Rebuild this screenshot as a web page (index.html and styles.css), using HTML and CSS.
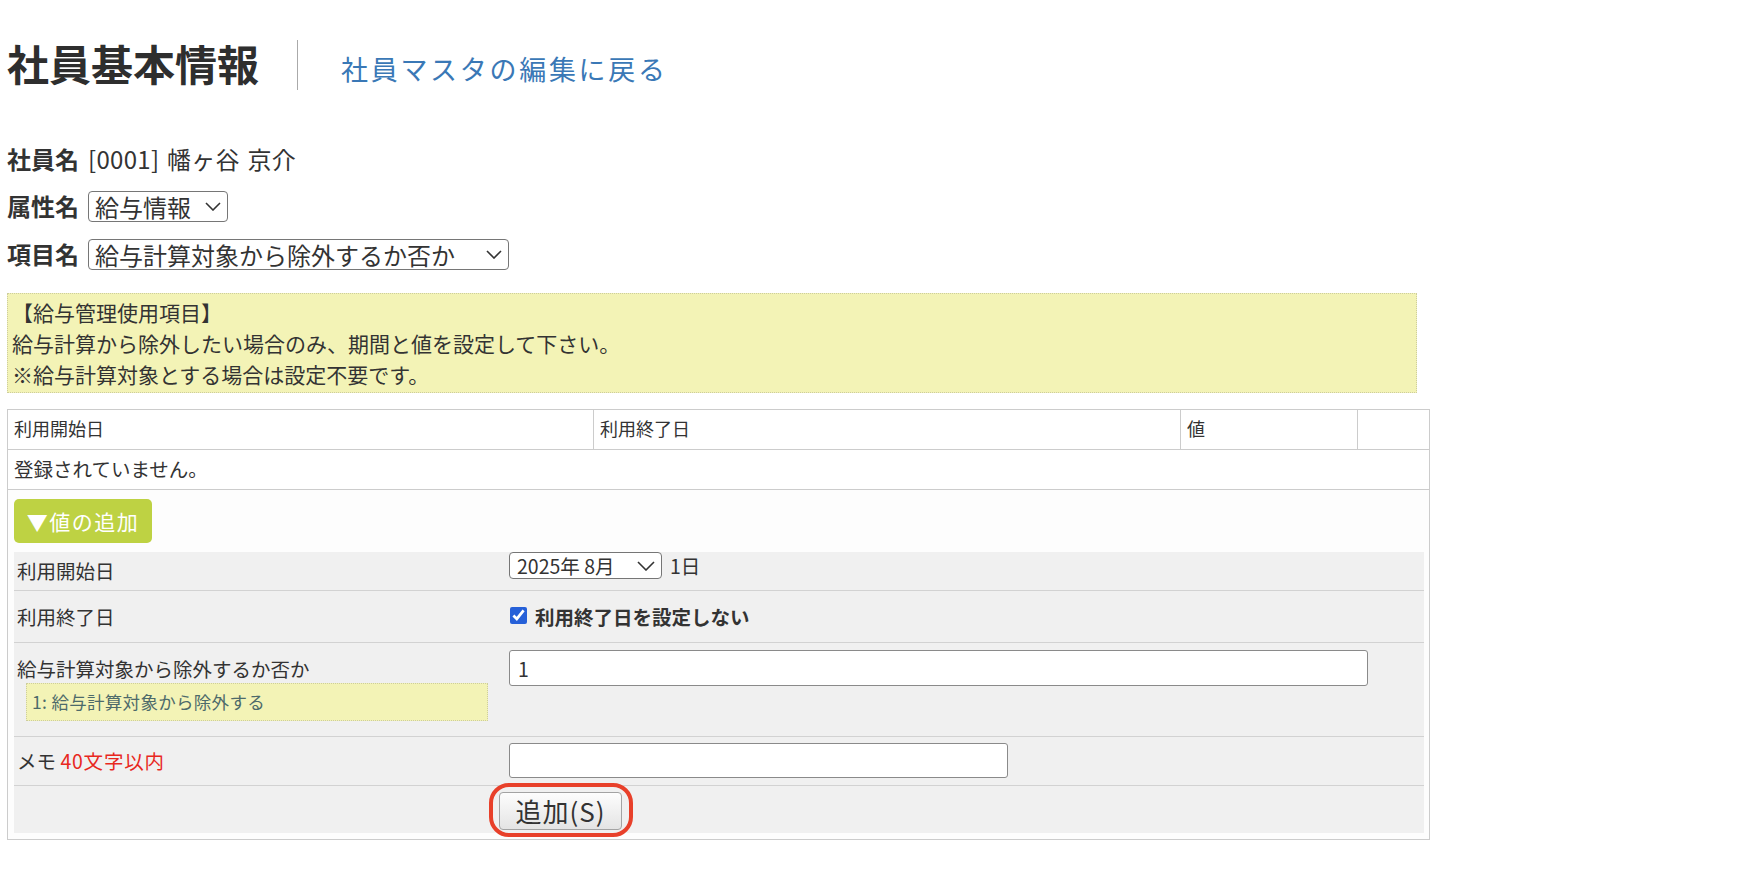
FILE: index.html
```html
<!DOCTYPE html>
<html lang="ja">
<head>
<meta charset="utf-8">
<title>社員基本情報</title>
<link rel="stylesheet" href="styles.css">
</head>
<body>
<div class="page">
  <header class="page-head">
    <h1 class="title">社員基本情報</h1>
    <a class="back-link" href="#">社員マスタの編集に戻る</a>
  </header>

  <div class="meta">
    <div class="meta-row"><span class="meta-label">社員名</span><span class="meta-name">[0001] 幡ヶ谷 京介</span></div>
    <div class="meta-row"><span class="meta-label">属性名</span>
      <span class="select-wrap sel-lg sel-attr">
        <select><option>給与情報</option></select>
        <svg class="chev" viewBox="0 0 16 9"><path d="M1 1 L8 8 L15 1" fill="none" stroke="#333" stroke-width="1.6"/></svg>
      </span>
    </div>
    <div class="meta-row"><span class="meta-label">項目名</span>
      <span class="select-wrap sel-lg sel-item">
        <select><option>給与計算対象から除外するか否か</option></select>
        <svg class="chev" viewBox="0 0 16 9"><path d="M1 1 L8 8 L15 1" fill="none" stroke="#333" stroke-width="1.6"/></svg>
      </span>
    </div>
  </div>

  <div class="notice">
    <div>【給与管理使用項目】</div>
    <div>給与計算から除外したい場合のみ、期間と値を設定して下さい。</div>
    <div>※給与計算対象とする場合は設定不要です。</div>
  </div>

  <div class="records">
    <div class="rec-head">
      <div>利用開始日</div>
      <div>利用終了日</div>
      <div>値</div>
      <div></div>
    </div>
    <div class="rec-empty">登録されていません。</div>
    <div class="rec-add">
      <button class="btn-toggle" type="button">▼値の追加</button>
      <div class="form">
        <div class="f-row r1">
          <div class="f-label">利用開始日</div>
          <div class="f-value v-top">
            <span class="select-wrap sel-sm">
              <select><option>2025年 8月</option></select>
              <svg class="chev" viewBox="0 0 18 10"><path d="M1 1 L9 9 L17 1" fill="none" stroke="#333" stroke-width="1.6"/></svg>
            </span>
            <span class="day">1日</span>
          </div>
        </div>
        <div class="f-row r2">
          <div class="f-label">利用終了日</div>
          <div class="f-value v-mid">
            <label class="check"><input type="checkbox" checked><span>利用終了日を設定しない</span></label>
          </div>
        </div>
        <div class="f-row r3">
          <div class="f-label l-top">
            <div>給与計算対象から除外するか否か</div>
            <div class="hint">1: 給与計算対象から除外する</div>
          </div>
          <div class="f-value v-pad7">
            <input class="txt txt-val" type="text" value="1">
          </div>
        </div>
        <div class="f-row r4">
          <div class="f-label">メモ <span class="limit">40文字以内</span></div>
          <div class="f-value v-pad6">
            <input class="txt txt-memo" type="text" value="">
          </div>
        </div>
        <div class="f-row r5">
          <div class="f-label"></div>
          <div class="f-value v-pad6">
            <span class="submit-wrap"><button class="btn-submit" type="button">追加(S)</button></span>
          </div>
        </div>
      </div>
    </div>
  </div>
</div>
</body>
</html>
```

FILE: styles.css
```css
* { box-sizing: border-box; }
html, body { margin: 0; padding: 0; background: #fff; }
body {
  font-family: "Noto Sans CJK JP", "Noto Sans", sans-serif;
  color: #333;
}
.page { padding: 40px 0 0 7px; width: 1744px; }

/* header */
.page-head { display: flex; height: 50px; }
.title {
  margin: 0 38px 0 0;
  font-size: 42px;
  font-weight: 700;
  line-height: 46px;
  color: #2e2e2e;
}
.back-link {
  display: block;
  height: 50px;
  border-left: 1px solid #aaa;
  padding: 8px 0 0 43px;
  line-height: 42px;
  font-size: 27px;
  letter-spacing: 2.7px;
  color: #3a78b6;
  text-decoration: none;
}

/* meta rows */
.meta { margin-top: 45px; }
.meta-row {
  display: flex;
  align-items: center;
  height: 48px;
  font-size: 24px;
  line-height: 30px;
}
.meta-row:first-child { height: 47px; }
.meta-label { font-weight: 700; margin-right: 9px; }
.meta-name { word-spacing: 2px; letter-spacing: 0.3px; }

.select-wrap { position: relative; display: inline-block; }
.select-wrap select {
  -webkit-appearance: none;
  appearance: none;
  display: block;
  margin: 0;
  font-family: inherit;
  color: #333;
  background: #fff;
  border: 1px solid #767676;
  border-radius: 4px;
}
.chev { position: absolute; top: 50%; pointer-events: none; }
.sel-lg select { height: 31px; padding: 0 30px 0 6px; font-size: 24px; line-height: 29px; }
.sel-attr select { width: 140px; }
.sel-item select { width: 421px; }
.sel-lg .chev { right: 7px; width: 16px; height: 9px; margin-top: -4px; }

.sel-sm select { width: 153px; height: 27px; padding: 0 30px 0 7px; font-size: 19.5px; line-height: 25px; }
.sel-sm .chev { right: 7px; width: 18px; height: 10px; margin-top: -5px; }

/* notice */
.notice {
  margin-top: 15px;
  width: 1410px;
  height: 100px;
  background: #f3f3b6;
  border: 1px dotted #cdcd9c;
  padding: 3px 4px 0;
  font-size: 21px;
  line-height: 31px;
}

/* records table */
.records {
  margin-top: 16px;
  width: 1423px;
  border: 1px solid #ccc;
}
.rec-head {
  display: grid;
  grid-template-columns: 586px 587px 177px 1fr;
  height: 40px;
  border-bottom: 1px solid #ccc;
}
.rec-head > div {
  border-right: 1px solid #ccc;
  padding-left: 6px;
  font-size: 18px;
  line-height: 37px;
}
.rec-head > div:last-child { border-right: 0; }
.rec-empty {
  height: 40px;
  border-bottom: 1px solid #ccc;
  padding-left: 6px;
  font-size: 19.5px;
  line-height: 37px;
}
.rec-add { background: #fdfdfd; padding: 9px 5px 6px 6px; }

.btn-toggle {
  display: block;
  width: 138px;
  height: 44px;
  margin: 0;
  padding: 0;
  border: 0;
  border-radius: 5px;
  background: #bed243;
  color: #fff;
  font-family: inherit;
  font-size: 21px;
  letter-spacing: 1.5px;
  line-height: 42px;
  text-align: center;
}

/* form */
.form { margin-top: 9px; background: #f0f0f0; }
.f-row {
  display: grid;
  grid-template-columns: 495px 1fr;
  border-bottom: 1px solid #d2d2d2;
}
.f-row:last-child { border-bottom: 0; }
.r1 { height: 39px; }
.r2 { height: 52px; }
.r3 { height: 94px; }
.r4 { height: 49px; }
.r5 { height: 47px; }

.f-label {
  align-self: center;
  padding-left: 3px;
  font-size: 19.5px;
  line-height: 28px;
}
.l-top { align-self: start; padding-top: 12px; }
.limit { color: #e8281e; letter-spacing: 0.8px; }

.hint {
  margin-left: 9px;
  width: 462px;
  height: 38px;
  background: #f3f3b6;
  border: 1px dotted #cdcd9c;
  padding-left: 5px;
  font-size: 17.5px;
  line-height: 36px;
  letter-spacing: 0.3px;
  color: #4d6a6a;
}

.f-value { font-size: 19.5px; }
.v-top { display: flex; align-items: center; align-self: start; }
.v-mid { display: flex; align-items: center; }
.v-pad7 { padding-top: 7px; }
.v-pad6 { padding-top: 6px; }
.day { margin-left: 8px; line-height: 27px; }

.check { display: flex; align-items: center; font-weight: 700; line-height: 28px; }
.check input {
  width: 17px;
  height: 17px;
  margin: -3px 8px 0 1px;
  accent-color: #2660d8;
}

.txt {
  display: block;
  margin: 0;
  padding: 0 8px;
  border: 1px solid #8a8a8a;
  border-radius: 3px;
  background: #fff;
  font-family: inherit;
  font-size: 19.5px;
  color: #333;
}
.txt-val { width: 859px; height: 36px; }
.txt-memo { width: 499px; height: 35px; }

.submit-wrap {
  position: relative;
  display: inline-block;
  margin-left: -10px;
}
.submit-wrap::after {
  content: "";
  position: absolute;
  left: -10px;
  right: -11px;
  top: -9px;
  bottom: -7px;
  border: 4px solid #e8402a;
  border-radius: 20px;
  pointer-events: none;
}
.btn-submit {
  display: block;
  width: 123px;
  height: 38px;
  margin: 0;
  padding: 0;
  border: 1px solid #a3a3a3;
  border-radius: 4px;
  background: linear-gradient(#fdfdfd, #e4e4e4);
  font-family: inherit;
  font-size: 26px;
  letter-spacing: 1px;
  line-height: 36px;
  color: #333;
  text-align: center;
}
```
